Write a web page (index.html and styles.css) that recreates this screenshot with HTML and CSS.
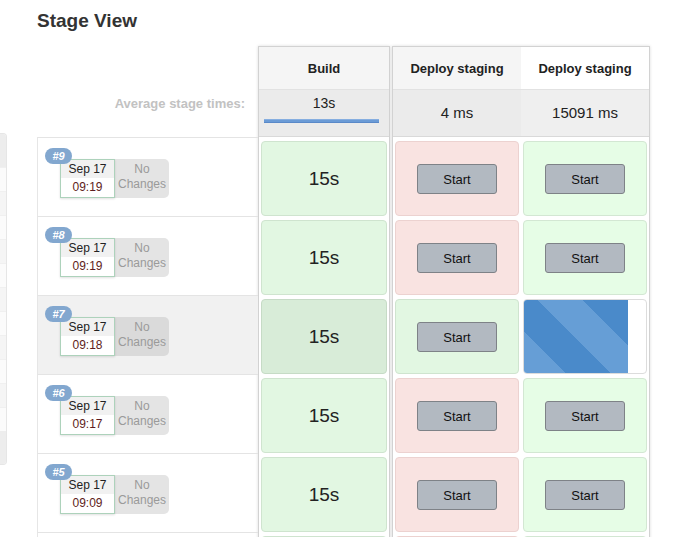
FILE: index.html
```html
<!DOCTYPE html>
<html>
<head>
<meta charset="utf-8">
<link rel="stylesheet" href="styles.css">
</head>
<body>
<div class="page">
  <aside class="side">
    <div class="side-head"></div>
    <div class="side-row"></div><div class="side-row alt"></div><div class="side-row"></div><div class="side-row alt"></div>
    <div class="side-row"></div><div class="side-row alt"></div><div class="side-row"></div><div class="side-row alt"></div>
    <div class="side-row"></div><div class="side-row alt"></div><div class="side-row"></div>
    <div class="side-head"></div>
  </aside>
  <main class="main">
    <h2 class="title">Stage View</h2>
    <div class="stage-table">
      <div class="runs">
        <div class="runs-head"></div>
        <div class="runs-avg">Average stage times:</div>
        <div class="run">
          <span class="badge">#9</span>
          <div class="run-info">
            <div class="date"><div class="day">Sep 17</div><div class="time">09:19</div></div>
            <div class="changes">No<br>Changes</div>
          </div>
        </div>
        <div class="run">
          <span class="badge">#8</span>
          <div class="run-info">
            <div class="date"><div class="day">Sep 17</div><div class="time">09:19</div></div>
            <div class="changes">No<br>Changes</div>
          </div>
        </div>
        <div class="run run-active">
          <span class="badge">#7</span>
          <div class="run-info">
            <div class="date"><div class="day">Sep 17</div><div class="time">09:18</div></div>
            <div class="changes">No<br>Changes</div>
          </div>
        </div>
        <div class="run">
          <span class="badge">#6</span>
          <div class="run-info">
            <div class="date"><div class="day">Sep 17</div><div class="time">09:17</div></div>
            <div class="changes">No<br>Changes</div>
          </div>
        </div>
        <div class="run">
          <span class="badge">#5</span>
          <div class="run-info">
            <div class="date"><div class="day">Sep 17</div><div class="time">09:09</div></div>
            <div class="changes">No<br>Changes</div>
          </div>
        </div>
        <div class="run"></div>
      </div>

      <div class="group group-build">
        <div class="col">
          <div class="head">Build</div>
          <div class="avg avg-top">
            <div>13s</div>
            <div class="avg-bar"></div>
          </div>
          <div class="slot"><div class="cell ok"><span class="dur">15s</span></div></div>
          <div class="slot"><div class="cell ok"><span class="dur">15s</span></div></div>
          <div class="slot"><div class="cell ok-active"><span class="dur">15s</span></div></div>
          <div class="slot"><div class="cell ok"><span class="dur">15s</span></div></div>
          <div class="slot"><div class="cell ok"><span class="dur">15s</span></div></div>
          <div class="slot"><div class="cell ok"></div></div>
        </div>
      </div>

      <div class="group group-deploy">
        <div class="col">
          <div class="head">Deploy staging</div>
          <div class="avg">4 ms</div>
          <div class="slot"><div class="cell fail"><button class="start">Start</button></div></div>
          <div class="slot"><div class="cell fail"><button class="start">Start</button></div></div>
          <div class="slot"><div class="cell ok"><button class="start">Start</button></div></div>
          <div class="slot"><div class="cell fail"><button class="start">Start</button></div></div>
          <div class="slot"><div class="cell fail"><button class="start">Start</button></div></div>
          <div class="slot"><div class="cell fail"></div></div>
        </div>
        <div class="col">
          <div class="head head-white">Deploy staging</div>
          <div class="avg avg-light">15091 ms</div>
          <div class="slot"><div class="cell ok2"><button class="start">Start</button></div></div>
          <div class="slot"><div class="cell ok2"><button class="start">Start</button></div></div>
          <div class="slot"><div class="cell running"><div class="progress" style="width:85%"></div></div></div>
          <div class="slot"><div class="cell ok2"><button class="start">Start</button></div></div>
          <div class="slot"><div class="cell ok2"><button class="start">Start</button></div></div>
          <div class="slot"><div class="cell ok2"></div></div>
        </div>
      </div>
    </div>
  </main>
</div>
</body>
</html>
```

FILE: styles.css
```css
* { box-sizing: border-box; }
html, body { margin: 0; padding: 0; background: #fff; }
body {
  font-family: "Liberation Sans", Arial, Helvetica, sans-serif;
  color: #333;
  overflow: hidden;
  height: 537px;
}
.page { display: flex; align-items: flex-start; }

/* left sidebar remnant */
.side {
  width: 7px;
  margin-top: 133px;
  border: 1px solid #e6e6e6;
  border-left: none;
  border-radius: 0 4px 4px 0;
  overflow: hidden;
  background: #fafafa;
}
.side-head { height: 33px; background: #ededed; }
.side-row { height: 24px; background: #fbfbfb; border-top: 1px solid #f0f0f0; }
.side-row.alt { background: #f5f5f5; }

.main { margin-left: 30px; flex: 1; }
.title {
  margin: 9px 0 13px;
  font-size: 19px;
  line-height: 24px;
  font-weight: bold;
  color: #333;
}

.stage-table { display: flex; align-items: flex-start; }

/* run column */
.runs { width: 221px; }
.runs-head { height: 44px; }
.runs-avg {
  height: 47px;
  text-align: right;
  padding-right: 13px;
  padding-top: 6px;
  font-size: 13px;
  line-height: 16px;
  font-weight: bold;
  color: #c2c2c2;
}
.run {
  position: relative;
  height: 79px;
  border-top: 1px solid #e4e4e4;
  border-left: 1px solid #e6e6e6;
  padding: 21px 0 0 22px;
}
.run-active { background: #f1f1f1; }
.badge {
  position: absolute;
  top: 10px;
  left: 7px;
  z-index: 2;
  width: 27px;
  height: 16px;
  border-radius: 8px;
  background: #82a7cf;
  color: #fff;
  font-size: 11px;
  line-height: 16px;
  font-weight: bold;
  font-style: italic;
  text-align: center;
}
.run-info { display: flex; }
.date {
  width: 55px;
  height: 39px;
  border: 1px solid #add2bb;
  background: #fff;
  box-shadow: 0 1px 2px rgba(0,0,0,0.12);
  text-align: center;
  font-size: 12px;
  position: relative;
  z-index: 1;
}
.day { height: 18px; line-height: 18px; background: #f1f1f1; color: #222; }
.time { height: 19px; line-height: 19px; color: #5e1d20; }
.changes {
  width: 54px;
  height: 39px;
  background: #e4e4e4;
  border-radius: 0 5px 5px 0;
  color: #9a9a9a;
  font-size: 12px;
  line-height: 15px;
  padding-top: 3px;
  text-align: center;
}
.run-active .changes { background: #dadada; }

/* stage groups */
.group {
  display: flex;
  border: 1px solid #d2d2d2;
  box-shadow: 0 0 3px rgba(0,0,0,0.14);
  background: #fff;
}
.group-build { width: 132px; }
.group-deploy { width: 258px; margin-left: 2px; }
.col { flex: 1; min-width: 0; }
.head {
  height: 43px;
  border-bottom: 1px solid #e2e2e2;
  background: #f5f5f5;
  font-size: 13px;
  font-weight: bold;
  color: #222;
  display: flex;
  align-items: center;
  justify-content: center;
}
.head-white { background: #fff; }
.avg {
  height: 47px;
  border-bottom: 1px solid #d9d9d9;
  background: #ebebeb;
  font-size: 15px;
  color: #222;
  display: flex;
  align-items: center;
  justify-content: center;
  padding-bottom: 1px;
}
.avg-light { background: #efefef; }
.avg-top {
  flex-direction: column;
  justify-content: flex-start;
  align-items: stretch;
  text-align: center;
  font-size: 14px;
  line-height: 16px;
  padding-top: 5px;
}
.avg-bar {
  margin: 8px 0 0 5px;
  width: 115px;
  height: 4px;
  background: #6b9bd6;
  border-top: 1px solid #86aee0;
  border-bottom: 1px solid #5a89c8;
}
.slot { height: 79px; padding: 4px 2px 0; }
.cell {
  height: 75px;
  border: 1px solid #d5e6d5;
  border-radius: 4px;
  display: flex;
  align-items: center;
  justify-content: center;
  overflow: hidden;
}
.ok { background: #e2f7e2; border-color: #cfe4cf; }
.ok2 { background: #e6fde6; border-color: #d3e7d3; }
.ok-active { background: #d8ecd8; border-color: #c6dbc6; }
.fail { background: #f9e3e1; border-color: #ecd2d0; }
.running {
  background: #fff;
  border-color: #dcdcdc;
  justify-content: flex-start;
  align-items: stretch;
}
.progress {
  height: 100%;
  background: repeating-linear-gradient(45deg,
    #669ed6 0, #669ed6 29px,
    #4a8aca 29px, #4a8aca 61px,
    #669ed6 61px, #669ed6 64px);
}
.dur { font-size: 19px; color: #222; }
.start {
  width: 80px;
  height: 30px;
  margin-top: 1px;
  background: #b2b9c1;
  border: 1px solid #7e8287;
  border-radius: 3px;
  font-family: "Liberation Sans", Arial, sans-serif;
  font-size: 13px;
  color: #111;
  padding: 0;
}
```
